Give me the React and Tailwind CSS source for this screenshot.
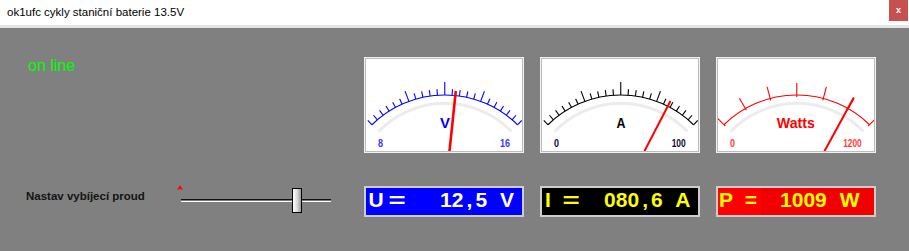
import React from 'react';

const CX = 80.75;
const CY = 141.8;
const R = 103.8;
const SPAN = 44.5;

const rad = (d) => (d * Math.PI) / 180;

const pt = (a, r, cx = CX, cy = CY) => [cx + r * Math.sin(rad(a)), cy - r * Math.cos(rad(a))];

const arcPath = (r, span, cx = CX, cy = CY) => {
    const [x1, y1] = pt(-span, r, cx, cy);
    const [x2, y2] = pt(span, r, cx, cy);
    return `M ${x1} ${y1} A ${r} ${r} 0 0 1 ${x2} ${y2}`;
};

// fine scale: 22 divisions, long marks at 6/16, centre tallest
const fineTicks = () => {
    const out = [];
    for (let i = 0; i <= 22; i++) {
        const a = -SPAN + (i * 2 * SPAN) / 22;
        let len = 6;
        if (i === 11) len = 13;
        else if (i === 6 || i === 16) len = 11;
        out.push({ a, r0: R, r1: R + len });
    }
    return out;
};

// coarse scale for the watt meter: 6 divisions
const coarseTicks = () => {
    const out = [];
    for (let i = 0; i <= 6; i++) {
        const a = -SPAN + (i * 2 * SPAN) / 6;
        out.push({ a, r0: R - 2, r1: R + 12 });
    }
    return out;
};

const Meter = ({ color, numColor, label, labelSize, labelLen, labelX, min, minLen, max, maxX, maxLen, ticks, needle }) => (
    <div className="w-[160px] h-[96px] border border-[#f2f2f2] bg-white">
        <div className="w-full h-full border border-[#bcbcbc]">
            <svg width="156" height="92" viewBox="2 2 156 92" className="block overflow-hidden">
                <path d={arcPath(92.5, 46, 81, 138.8)} fill="none" stroke="#ececec" strokeWidth="3" />
                <path d={arcPath(R, SPAN)} fill="none" stroke={color} strokeWidth="1.1" />
                {ticks.map((t, i) => {
                    const [x1, y1] = pt(t.a, t.r0);
                    const [x2, y2] = pt(t.a, t.r1);
                    return <line key={i} x1={x1} y1={y1} x2={x2} y2={y2} stroke={color} strokeWidth="1.1" />;
                })}
                <text
                    x={labelX}
                    y="71"
                    textAnchor="middle"
                    fontFamily="'Liberation Sans', Arial, sans-serif"
                    fontWeight="bold"
                    fontSize={labelSize}
                    fill={color}
                    textLength={labelLen}
                    lengthAdjust="spacingAndGlyphs"
                >
                    {label}
                </text>
                <text x="16.4" y="89.7" textAnchor="middle" fontFamily="'Liberation Sans', Arial, sans-serif" fontWeight="bold" fontSize="11.5" fill={numColor} textLength={minLen} lengthAdjust="spacingAndGlyphs">
                    {min}
                </text>
                <text x={maxX} y="89.7" textAnchor="middle" fontFamily="'Liberation Sans', Arial, sans-serif" fontWeight="bold" fontSize="11.5" fill={numColor} textLength={maxLen} lengthAdjust="spacingAndGlyphs">
                    {max}
                </text>
                <line x1={needle[0]} y1={needle[1]} x2={needle[2]} y2={needle[3]} stroke="#ff0000" strokeWidth={needle[4]} />
            </svg>
        </div>
    </div>
);

const Readout = ({ bg, text, left, sign, eqClass, value, unit, gaps, split }) => (
    <div className={`w-[160px] h-[31px] border-2 border-[#cdcdcd] ${bg} flex items-stretch overflow-hidden`}>
        <div className={`flex items-start pt-[1px] leading-none text-[21px] font-bold ${text}`}>
            <span className="inline-block w-[16px] text-center" style={{ marginLeft: left }}>{sign}</span>
            <span className="inline-block w-[20px] text-center" style={{ marginLeft: gaps[0] }}>
                <span className={`inline-block ${eqClass}`}>=</span>
            </span>
        </div>
        <div className={`flex-1 flex items-start pt-[1px] leading-none text-[21px] font-bold ${text} ${split}`}>
            <span className="flex" style={{ marginLeft: gaps[1] }}>
                {value.map((v, i) =>
                    v === ',' ? <span key={i} className="inline-block w-[12px] text-center">,</span> : <span key={i}>{v}</span>
                )}
            </span>
            <span className="inline-block w-[20px] text-center" style={{ marginLeft: gaps[2] }}>{unit}</span>
        </div>
    </div>
);

const App = () => {
    return (
        <div className="w-[909px] h-[251px] bg-[#808080] flex flex-col overflow-hidden font-['Liberation_Sans',Arial,sans-serif]">
            {/* window caption */}
            <div className="h-[25px] bg-white flex items-start justify-between shrink-0">
                <span className="pl-[7px] pt-[7px] text-[11.5px] leading-none text-black">ok1ufc cykly staniční baterie 13.5V</span>
                <div className="w-[19px] h-[21px] mr-[1px] bg-[#c75050] flex items-center justify-center text-white text-[9px] font-bold leading-none">x</div>
            </div>
            <div className="h-[3px] bg-[#e4e4e4] shrink-0" />

            <div className="flex flex-col pt-[29px]">
                {/* gauges row */}
                <div className="flex h-[96px]">
                    <div className="w-[364px] pl-[28px] pt-[1px]">
                        <span className="block text-[16px] leading-none text-[#00ff00]">on line</span>
                    </div>
                    <div className="flex gap-[16px]">
                        <Meter
                            color="#0000ff"
                            numColor="#3838ff"
                            label="V"
                            labelSize="15"
                            labelLen="10"
                            labelX="81"
                            min="8"
                            minLen="5"
                            max="16"
                            maxX="141"
                            maxLen="10"
                            ticks={fineTicks()}
                            needle={[85.3, 96, 91.8, 34, 2.6]}
                        />
                        <Meter
                            color="#000000"
                            numColor="#0a0a30"
                            label="A"
                            labelSize="15"
                            labelLen="9"
                            labelX="81"
                            min="0"
                            minLen="5"
                            max="100"
                            maxX="138.7"
                            maxLen="14"
                            ticks={fineTicks()}
                            needle={[103.5, 96, 130.5, 44, 2]}
                        />
                        <Meter
                            color="#ff0000"
                            numColor="#ff3c3c"
                            label="Watts"
                            labelSize="15"
                            labelLen="38"
                            labelX="79.8"
                            min="0"
                            minLen="5"
                            max="1200"
                            maxX="136.5"
                            maxLen="18.5"
                            ticks={coarseTicks()}
                            needle={[107.5, 96, 137.8, 40.5, 2]}
                        />
                    </div>
                </div>

                {/* control + readouts row */}
                <div className="flex h-[31px] mt-[33px]">
                    <div className="w-[364px] flex items-start">
                        <span className="ml-[26px] w-[155px] mt-[5px] text-[11.5px] leading-none font-bold text-[#141414]">Nastav vybíjecí proud</span>
                        <div className="relative w-[150px] h-[31px]">
                            <svg className="absolute left-[-4px] top-[-1px]" width="6" height="6" viewBox="0 0 6 6">
                                <polygon points="0,5 3,0 6,5 3,4" fill="#ff0000" />
                            </svg>
                            <div className="mt-[13px] h-[3px] border-t border-b border-t-[#111111] border-b-white bg-[#7a7a7a]" />
                            <div className="absolute left-[111px] top-[2px] w-[10px] h-[25px] border border-black bg-linear-to-r from-white via-[#dcdcdc] to-[#9a9a9a]" />
                        </div>
                    </div>
                    <div className="flex gap-[16px]">
                        <Readout
                            bg="bg-[#0000ff]"
                            text="text-white"
                            left="2px"
                            sign="U"
                            eqClass="scale-x-[1.4]"
                            value={['1', '2', ',', '5']}
                            unit="V"
                            gaps={['3px', '33px', '10px']}
                            split=""
                        />
                        <Readout
                            bg="bg-black"
                            text="text-[#ffff00]"
                            left="-2px"
                            sign="I"
                            eqClass="scale-x-[1.4]"
                            value={['0', '8', '0', ',', '6']}
                            unit="A"
                            gaps={['5px', '23px', '10px']}
                            split=""
                        />
                        <Readout
                            bg="bg-[#ff0000]"
                            text="text-[#ffff00]"
                            left="0px"
                            sign="P"
                            eqClass=""
                            value={['1', '0', '0', '9']}
                            unit="W"
                            gaps={['7px', '19px', '13px']}
                            split="bg-[#f00000]"
                        />
                    </div>
                </div>
            </div>
        </div>
    );
};

export default App;
